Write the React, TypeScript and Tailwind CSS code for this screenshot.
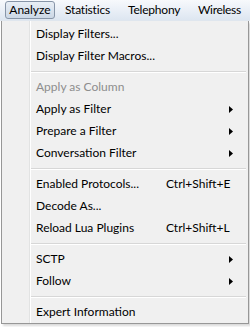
import { Fragment } from "react";

type Item =
  | { sep: true }
  | { label: string; shortcut?: string; sub?: boolean; disabled?: boolean; sep?: false };

const ITEMS: Item[] = [
  { label: "Display Filters..." },
  { label: "Display Filter Macros..." },
  { sep: true },
  { label: "Apply as Column", disabled: true },
  { label: "Apply as Filter", sub: true },
  { label: "Prepare a Filter", sub: true },
  { label: "Conversation Filter", sub: true },
  { sep: true },
  { label: "Enabled Protocols...", shortcut: "Ctrl+Shift+E" },
  { label: "Decode As..." },
  { label: "Reload Lua Plugins", shortcut: "Ctrl+Shift+L" },
  { sep: true },
  { label: "SCTP", sub: true },
  { label: "Follow", sub: true },
  { sep: true },
  { label: "Expert Information" },
];

function Arrow() {
  return (
    <svg width="4" height="7" viewBox="0 0 4 7" className="-ml-[2px] block">
      <path d="M0 0 L4 3.5 L0 7 Z" fill="#000" />
    </svg>
  );
}

export default function App() {
  return (
    <div className="h-[327px] w-[250px] overflow-hidden bg-white font-['Segoe_UI',Lato,sans-serif] text-[12px] text-black">
      {/* menu bar */}
      <div className="flex h-[21px] items-center border-b border-[#dfe6ee] bg-gradient-to-b from-[#f7f9fc] to-[#dde6f1] whitespace-nowrap">
        <div className="ml-[5px] flex h-[18px] w-[50px] items-center justify-center rounded-[3px] border border-[#8795a8] bg-gradient-to-b from-[#e8eef5] to-[#ccd8e6]">
          Analyze
        </div>
        <div className="ml-[10px] w-[63px] tracking-[-0.2px]">Statistics</div>
        <div className="w-[70px] tracking-[-0.2px]">Telephony</div>
        <div className="tracking-[-0.3px]">Wireless</div>
      </div>

      {/* dropdown */}
      <div className="relative ml-[1px] w-[248px] border border-t-0 border-[#979797] bg-[#f0f0f0] shadow-[2px_2px_2px_rgba(0,0,0,0.15)]">
        <div className="flex">
          <div className="w-[28px] shrink-0 border-r border-[#e2e3e3] shadow-[1px_0_0_#ffffff]" />
          <div className="flex-1 pt-[2px] pl-[1px]">
            {ITEMS.map((it, i) =>
              it.sep ? (
                <div key={i} className="flex h-[9px] items-center pr-[2px]">
                  <div className="h-[2px] w-full border-t border-[#d7d7d7] bg-white" />
                </div>
              ) : (
                <Fragment key={i}>
                  <div
                    className={`flex h-[22px] items-center pl-[5px] ${
                      it.disabled ? "text-[#8d8d8d]" : ""
                    }`}
                  >
                    <span className="w-[130px] whitespace-nowrap">{it.label}</span>
                    <span className="w-[65px] whitespace-nowrap">{it.shortcut}</span>
                    {it.sub && <Arrow />}
                  </div>
                </Fragment>
              )
            )}
          </div>
        </div>
      </div>
    </div>
  );
}
